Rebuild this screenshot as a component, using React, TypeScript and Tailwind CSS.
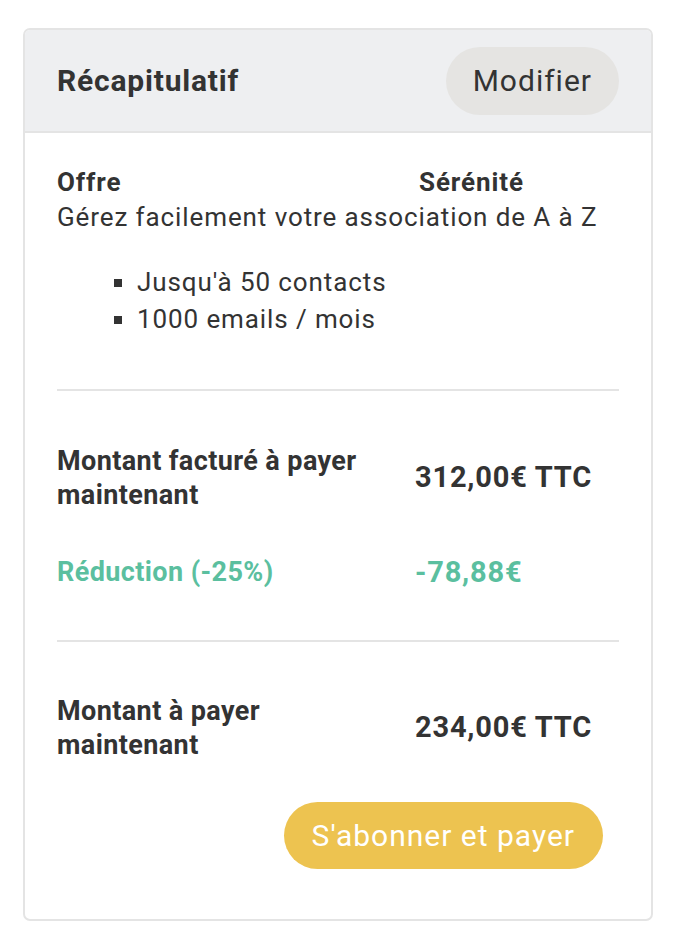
export default function App() {
  const features = ["Jusqu'à 50 contacts", "1000 emails / mois"];

  return (
    <div
      className="bg-white px-[23px] pt-[28px] pb-[28px] text-[#333333]"
      style={{ fontFamily: "Roboto, 'Noto Sans', sans-serif" }}
    >
      <div className="overflow-hidden rounded-[7px] border-2 border-[#e4e4e4] bg-white">
        {/* Header */}
        <div className="flex h-[103px] items-center justify-between border-b-2 border-[#e4e4e4] bg-[#eeeff1] pl-[32px] pr-[32px]">
          <h2 className="text-[30px] font-bold tracking-[0.8px]">Récapitulatif</h2>
          <button className="h-[68px] rounded-full bg-[#e5e4e2] px-[27px] text-[30px] tracking-[1px] text-[#333333]">
            Modifier
          </button>
        </div>

        {/* Body */}
        <div className="px-[32px] pt-[32px] pb-[50px]">
          {/* Offer */}
          <div className="grid grid-cols-[362px_1fr] text-[26px] leading-[35px] tracking-[0.9px]">
            <span className="font-bold">Offre</span>
            <span className="font-bold">Sérénité</span>
          </div>
          <p className="text-[26px] leading-[35px] tracking-[0.9px]">
            Gérez facilement votre association de A à Z
          </p>
          <ul className="mt-[29px] list-[square] pl-[80px] text-[26px] leading-[37px] tracking-[0.9px]">
            {features.map((f) => (
              <li key={f}>{f}</li>
            ))}
          </ul>

          <div className="mt-[51px] h-[2px] bg-[#e4e4e4]" />

          {/* Billed amount */}
          <div className="mt-[53px] grid grid-cols-[358px_1fr] items-center">
            <span className="text-[27px] font-bold leading-[34px] tracking-[0.4px]">
              Montant facturé à payer
              <br />
              maintenant
            </span>
            <span className="text-[29px] font-bold tracking-[0.8px]">312,00€ TTC</span>
          </div>
          <div className="mt-[43px] grid grid-cols-[358px_1fr] items-center font-bold leading-[34px] text-[#5bbf9f]">
            <span className="text-[27px] tracking-[0.4px]">Réduction (-25%)</span>
            <span className="text-[29px] tracking-[0.8px]">-78,88€</span>
          </div>

          <div className="mt-[51px] h-[2px] bg-[#e4e4e4]" />

          {/* Amount to pay */}
          <div className="mt-[52px] grid grid-cols-[358px_1fr] items-center">
            <span className="text-[27px] font-bold leading-[34px] tracking-[0.4px]">
              Montant à payer
              <br />
              maintenant
            </span>
            <span className="text-[29px] font-bold tracking-[0.8px]">234,00€ TTC</span>
          </div>

          <div className="mt-[40px] flex justify-end pr-[16px]">
            <button className="h-[67px] rounded-full bg-[#edc350] px-[28px] text-[30px] tracking-[1px] text-white">
              S'abonner et payer
            </button>
          </div>
        </div>
      </div>
    </div>
  );
}
